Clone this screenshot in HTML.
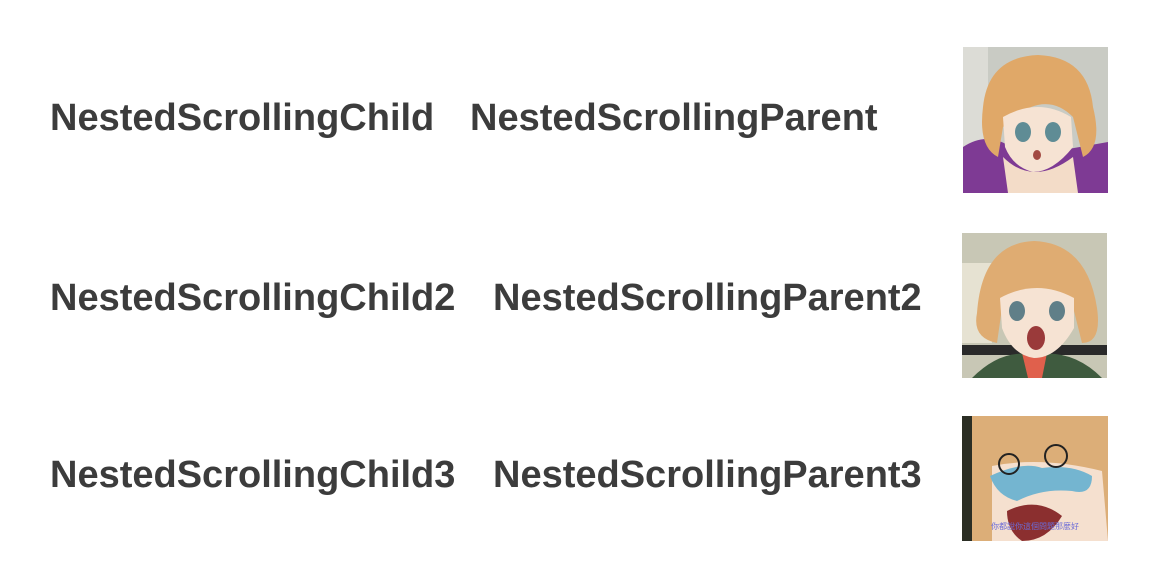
<!DOCTYPE html>
<html><head><meta charset="utf-8"><style>
body{margin:0;width:1161px;height:584px;background:#fff;position:relative;overflow:hidden;font-family:"Liberation Sans",sans-serif;}
.t{position:absolute;font-weight:bold;font-size:38px;color:#3c3c3c;line-height:1;white-space:nowrap;}
svg{position:absolute;}
</style></head><body>
<div class="t" style="left:50px;top:99px">NestedScrollingChild</div>
<div class="t" style="left:470px;top:99px">NestedScrollingParent</div>
<div class="t" style="left:50px;top:279px">NestedScrollingChild2</div>
<div class="t" style="left:493px;top:279px">NestedScrollingParent2</div>
<div class="t" style="left:50px;top:456px">NestedScrollingChild3</div>
<div class="t" style="left:493px;top:456px">NestedScrollingParent3</div>

<svg style="left:963px;top:47px" width="145" height="146" viewBox="0 0 145 146">
<rect width="145" height="146" fill="#c9cbc4"/>
<rect x="0" y="0" width="25" height="146" fill="#dcdcd6"/>
<path d="M0 100 Q30 80 60 110 L145 95 L145 146 L0 146Z" fill="#7e3a94"/>
<path d="M40 110 Q70 140 110 110 L115 146 L45 146Z" fill="#f3dcc8"/>
<path d="M20 60 Q25 10 75 8 Q125 10 130 60 Q140 100 120 110 L110 70 Q80 40 40 80 L35 110 Q15 100 20 60Z" fill="#e0a868"/>
<path d="M40 70 Q75 50 108 70 L110 100 Q90 125 70 125 Q50 120 42 100Z" fill="#f6e3d3"/>
<ellipse cx="60" cy="85" rx="8" ry="10" fill="#5f8c95"/>
<ellipse cx="90" cy="85" rx="8" ry="10" fill="#5f8c95"/>
<ellipse cx="74" cy="108" rx="4" ry="5" fill="#a24a42"/>
</svg>

<svg style="left:962px;top:233px" width="145" height="145" viewBox="0 0 145 145">
<rect width="145" height="145" fill="#c8c7b5"/>
<rect x="0" y="30" width="30" height="80" fill="#e6e2d2"/>
<rect x="0" y="112" width="145" height="10" fill="#2a2a2a"/>
<path d="M10 145 Q40 115 72 122 Q110 115 140 145Z" fill="#3f5b3f"/>
<path d="M60 120 L85 120 L80 145 L66 145Z" fill="#e0604c"/>
<path d="M15 80 Q20 10 72 8 Q125 10 135 75 Q140 110 120 110 L110 70 Q80 40 40 75 L35 110 Q10 105 15 80Z" fill="#dfac72"/>
<path d="M38 65 Q75 45 112 65 L112 95 Q95 125 72 125 Q50 122 40 95Z" fill="#f6e3d3"/>
<ellipse cx="55" cy="78" rx="8" ry="10" fill="#607f88"/>
<ellipse cx="95" cy="78" rx="8" ry="10" fill="#607f88"/>
<ellipse cx="74" cy="105" rx="9" ry="12" fill="#9a3a3a"/>
</svg>

<svg style="left:962px;top:416px" width="146" height="125" viewBox="0 0 146 125">
<rect width="146" height="125" fill="#2b2e24"/>
<path d="M10 0 L146 0 L146 125 L10 125Z" fill="#dcae78"/>
<path d="M30 50 Q80 40 140 55 L146 125 L30 125Z" fill="#f5e0cf"/>
<path d="M28 60 Q60 45 80 52 Q110 48 130 60 Q130 80 110 75 Q80 72 55 85 Q35 80 28 60Z" fill="#74b5d0"/>
<circle cx="47" cy="48" r="10" fill="none" stroke="#222" stroke-width="2"/>
<circle cx="94" cy="40" r="11" fill="none" stroke="#222" stroke-width="2"/>
<path d="M45 95 Q75 80 100 100 Q85 125 60 125 Q45 115 45 95Z" fill="#8b2f2f"/>
<text x="73" y="113" font-size="8" fill="#6b6bd8" text-anchor="middle" font-family="Noto Sans CJK SC,sans-serif">你都說你這個問題那麼好</text>
</svg>
</body></html>
